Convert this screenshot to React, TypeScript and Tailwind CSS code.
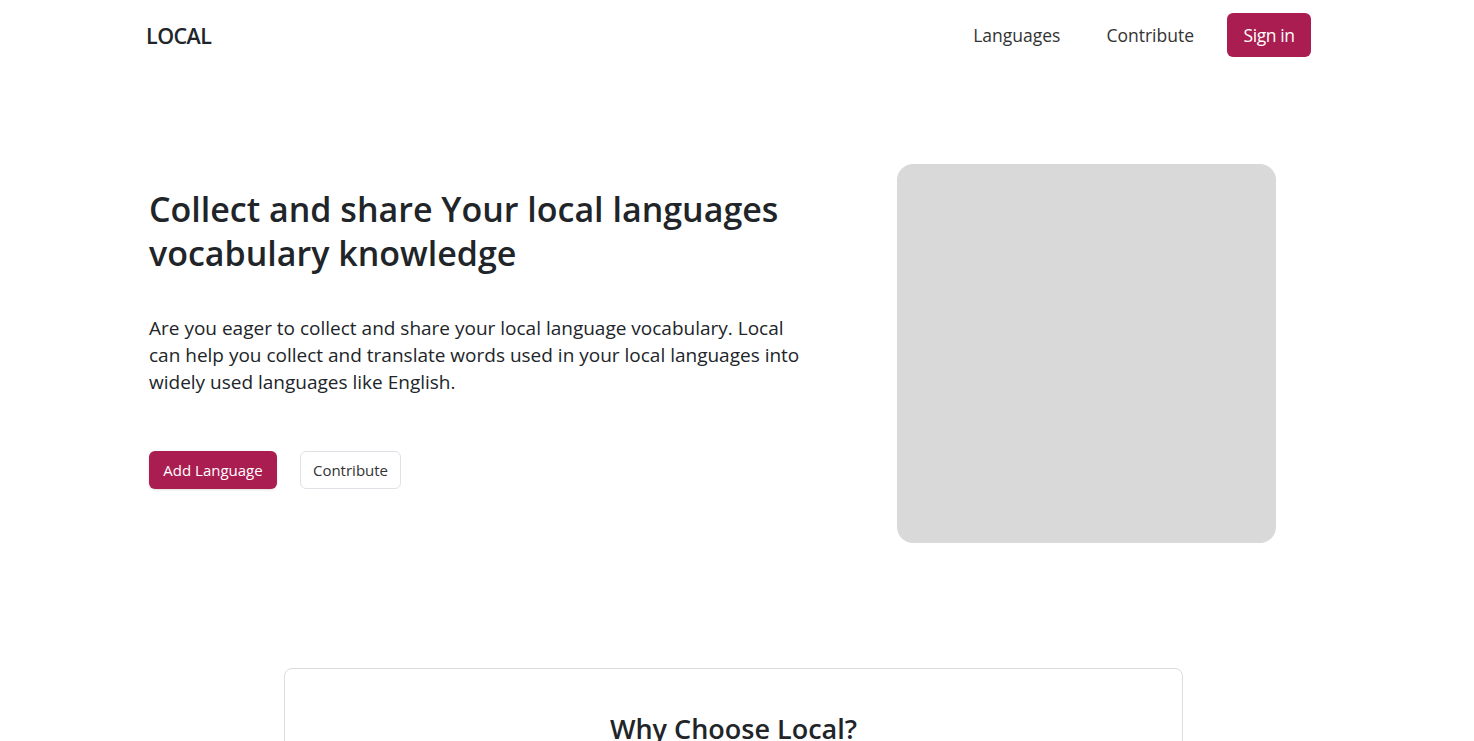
export default function App() {
  return (
    <div className="min-h-screen bg-white text-[#212529]" style={{ fontFamily: '"Open Sans", "Noto Sans", sans-serif' }}>
      {/* Navbar */}
      <nav className="flex h-[70px] items-center justify-between pl-[146px] pr-[163px]">
        <a className="mt-[2px] text-[21.5px] font-semibold tracking-tight text-[#212529]">LOCAL</a>
        <div className="flex items-center">
          <a className="text-[17.5px] text-[#333]">Languages</a>
          <a className="ml-[46px] text-[17.5px] text-[#333]">Contribute</a>
          <button className="ml-[33px] h-[44px] w-[84px] rounded-[6px] bg-[#a91d50] text-[17.5px] tracking-tight text-white">
            Sign in
          </button>
        </div>
      </nav>

      {/* Hero */}
      <section className="flex items-start pl-[149px] pt-[94px]">
        <div className="w-[660px] pt-[23px]">
          <h1 className="text-[34px] leading-[44px] font-semibold text-[#212529]">
            Collect and share Your local languages vocabulary knowledge
          </h1>
          <p className="mt-[40px] w-[660px] text-[19px] leading-[27px]">
            Are you eager to collect and share your local language vocabulary. Local can help you collect and translate
            words used in your local languages into widely used languages like English.
          </p>
          <div className="mt-[55px] flex items-center gap-[23px]">
            <button className="h-[38px] w-[128px] rounded-[6px] bg-[#a91d50] text-[15px] text-white shadow-sm">
              Add Language
            </button>
            <button className="h-[38px] w-[101px] rounded-[6px] border border-[#dee2e6] bg-white text-[15px] text-[#333]">
              Contribute
            </button>
          </div>
        </div>
        <div className="ml-[88px] h-[379px] w-[379px] rounded-[16px] bg-[#d9d9d9]" />
      </section>

      {/* Why choose */}
      <section className="mt-[125px] flex justify-center pr-[7px]">
        <div className="h-[200px] w-[899px] rounded-[8px] border border-[#dcdcdc] pt-[40px] text-center">
          <h2 className="text-[27px] font-semibold">Why Choose Local?</h2>
        </div>
      </section>
    </div>
  );
}
